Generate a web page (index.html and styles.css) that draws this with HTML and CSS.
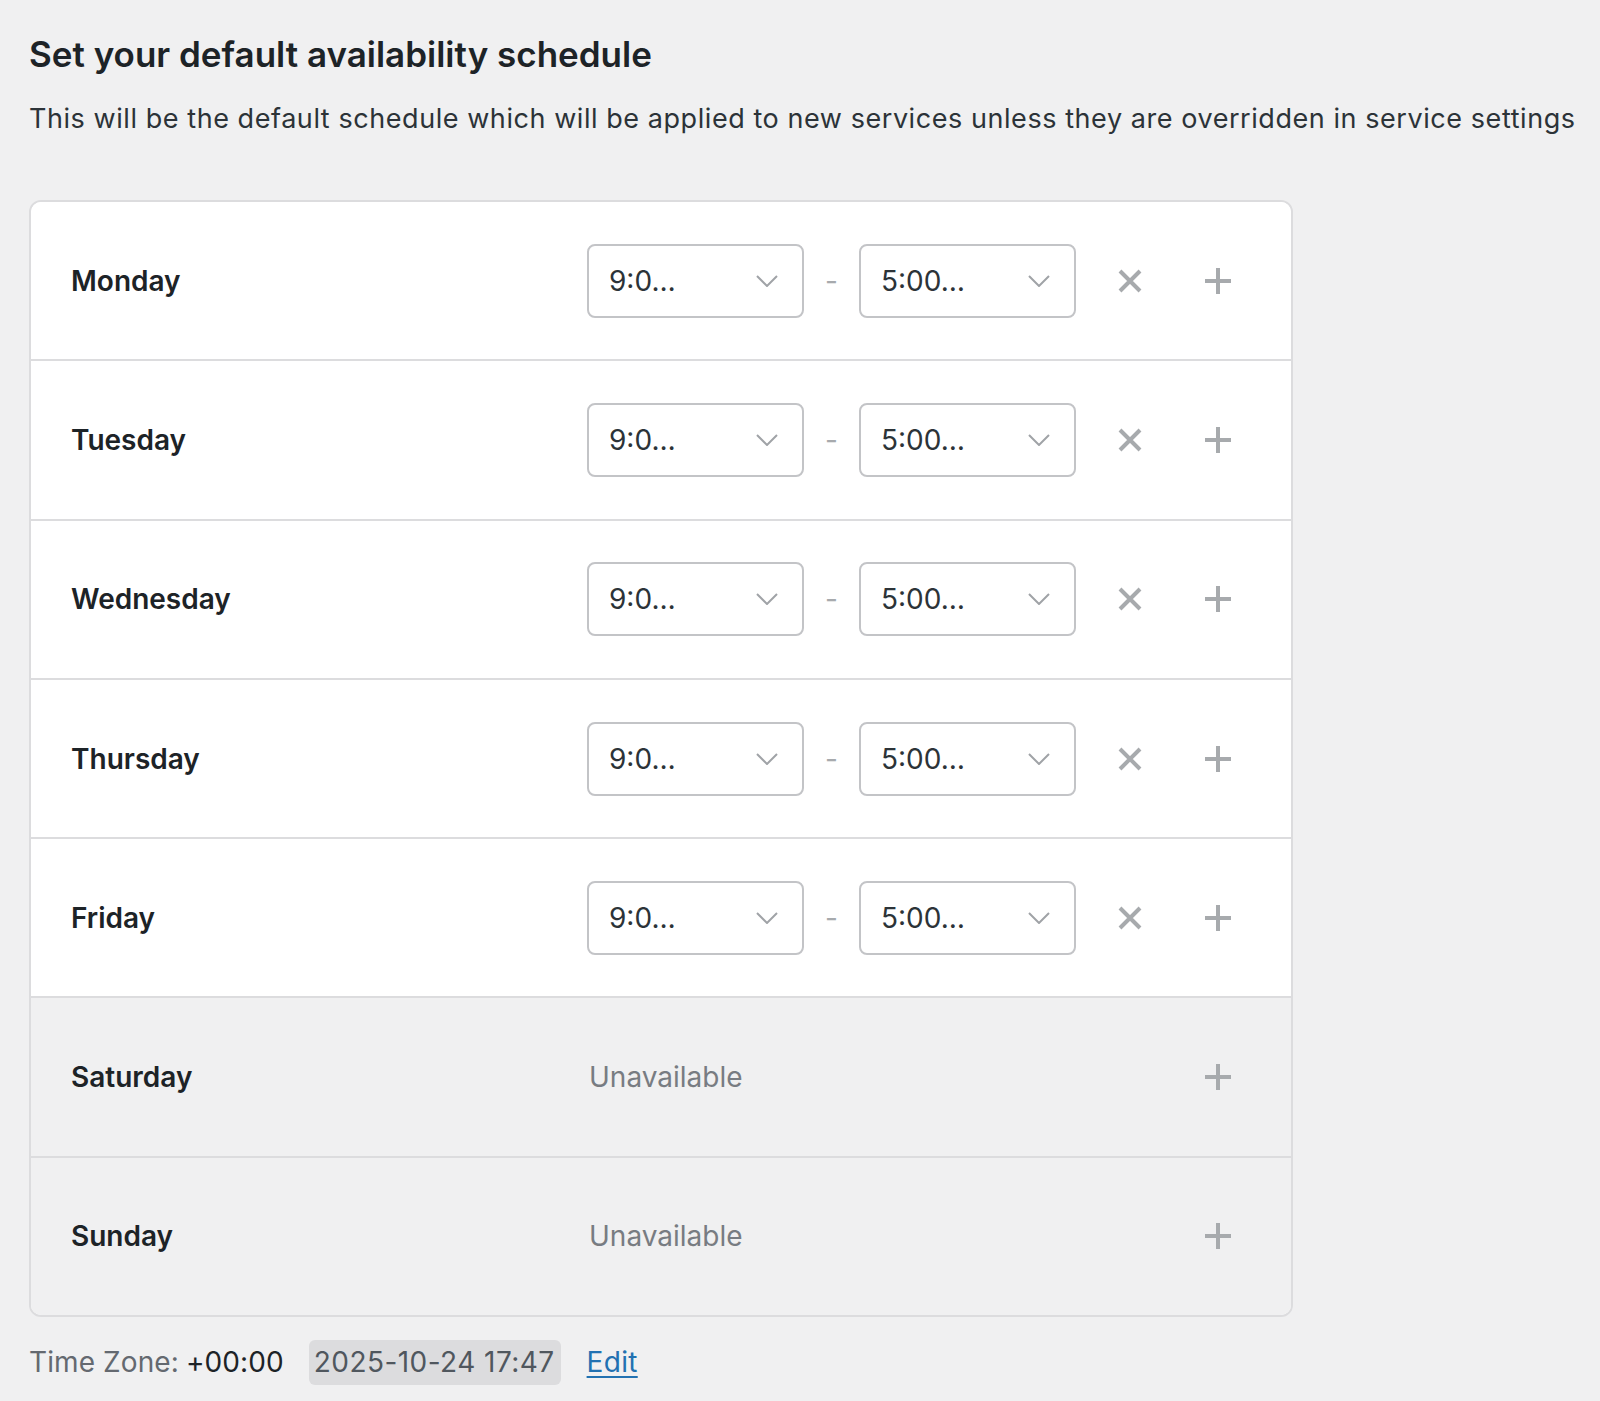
FILE: index.html
```html
<!DOCTYPE html>
<html lang="en">
<head>
<meta charset="utf-8">
<title>Availability schedule</title>
<link rel="stylesheet" href="styles.css">
</head>
<body>
<div class="page">
  <h1 class="title">Set your default availability schedule</h1>
  <p class="desc">This will be the default schedule which will be applied to new services unless they are overridden in service settings</p>

  <div class="card">
    <div class="row">
      <div class="day">Monday</div>
      <div class="select"><span class="val">9:0…</span><svg class="chev" width="22" height="12" viewBox="0 0 22 12"><polyline points="1,1 11,11 21,1"/></svg></div>
      <div class="dash">-</div>
      <div class="select"><span class="val">5:00…</span><svg class="chev" width="22" height="12" viewBox="0 0 22 12"><polyline points="1,1 11,11 21,1"/></svg></div>
      <div class="actions">
        <span class="btn"><svg width="24" height="24" viewBox="0 0 24 24"><path d="M2 2L22 22M22 2L2 22"/></svg></span>
        <span class="btn"><svg width="28" height="28" viewBox="0 0 28 28"><path d="M14 1V27M1 14H27"/></svg></span>
      </div>
    </div>
    <div class="row">
      <div class="day">Tuesday</div>
      <div class="select"><span class="val">9:0…</span><svg class="chev" width="22" height="12" viewBox="0 0 22 12"><polyline points="1,1 11,11 21,1"/></svg></div>
      <div class="dash">-</div>
      <div class="select"><span class="val">5:00…</span><svg class="chev" width="22" height="12" viewBox="0 0 22 12"><polyline points="1,1 11,11 21,1"/></svg></div>
      <div class="actions">
        <span class="btn"><svg width="24" height="24" viewBox="0 0 24 24"><path d="M2 2L22 22M22 2L2 22"/></svg></span>
        <span class="btn"><svg width="28" height="28" viewBox="0 0 28 28"><path d="M14 1V27M1 14H27"/></svg></span>
      </div>
    </div>
    <div class="row">
      <div class="day">Wednesday</div>
      <div class="select"><span class="val">9:0…</span><svg class="chev" width="22" height="12" viewBox="0 0 22 12"><polyline points="1,1 11,11 21,1"/></svg></div>
      <div class="dash">-</div>
      <div class="select"><span class="val">5:00…</span><svg class="chev" width="22" height="12" viewBox="0 0 22 12"><polyline points="1,1 11,11 21,1"/></svg></div>
      <div class="actions">
        <span class="btn"><svg width="24" height="24" viewBox="0 0 24 24"><path d="M2 2L22 22M22 2L2 22"/></svg></span>
        <span class="btn"><svg width="28" height="28" viewBox="0 0 28 28"><path d="M14 1V27M1 14H27"/></svg></span>
      </div>
    </div>
    <div class="row">
      <div class="day">Thursday</div>
      <div class="select"><span class="val">9:0…</span><svg class="chev" width="22" height="12" viewBox="0 0 22 12"><polyline points="1,1 11,11 21,1"/></svg></div>
      <div class="dash">-</div>
      <div class="select"><span class="val">5:00…</span><svg class="chev" width="22" height="12" viewBox="0 0 22 12"><polyline points="1,1 11,11 21,1"/></svg></div>
      <div class="actions">
        <span class="btn"><svg width="24" height="24" viewBox="0 0 24 24"><path d="M2 2L22 22M22 2L2 22"/></svg></span>
        <span class="btn"><svg width="28" height="28" viewBox="0 0 28 28"><path d="M14 1V27M1 14H27"/></svg></span>
      </div>
    </div>
    <div class="row">
      <div class="day">Friday</div>
      <div class="select"><span class="val">9:0…</span><svg class="chev" width="22" height="12" viewBox="0 0 22 12"><polyline points="1,1 11,11 21,1"/></svg></div>
      <div class="dash">-</div>
      <div class="select"><span class="val">5:00…</span><svg class="chev" width="22" height="12" viewBox="0 0 22 12"><polyline points="1,1 11,11 21,1"/></svg></div>
      <div class="actions">
        <span class="btn"><svg width="24" height="24" viewBox="0 0 24 24"><path d="M2 2L22 22M22 2L2 22"/></svg></span>
        <span class="btn"><svg width="28" height="28" viewBox="0 0 28 28"><path d="M14 1V27M1 14H27"/></svg></span>
      </div>
    </div>
    <div class="row off">
      <div class="day">Saturday</div>
      <div class="unavail">Unavailable</div>
      <div class="actions">
        <span class="btn empty"></span>
        <span class="btn"><svg width="28" height="28" viewBox="0 0 28 28"><path d="M14 1V27M1 14H27"/></svg></span>
      </div>
    </div>
    <div class="row off">
      <div class="day">Sunday</div>
      <div class="unavail">Unavailable</div>
      <div class="actions">
        <span class="btn empty"></span>
        <span class="btn"><svg width="28" height="28" viewBox="0 0 28 28"><path d="M14 1V27M1 14H27"/></svg></span>
      </div>
    </div>
  </div>

  <div class="footer">
    <span class="tz-label">Time Zone:</span>
    <span class="tz-val">+00:00</span>
    <span class="tz-date">2025-10-24 17:47</span>
    <a class="tz-edit" href="#">Edit</a>
  </div>
</div>
</body>
</html>
```

FILE: styles.css
```css
html, body {
  margin: 0;
  padding: 0;
  background: #f0f0f1;
}

body {
  font-family: Inter, "Noto Sans", "Liberation Sans", sans-serif;
  color: #1d2327;
}

.page {
  padding: 34px 29px 0 29px;
}

.title {
  margin: 0;
  font-size: 35px;
  line-height: 40px;
  font-weight: 600;
  color: #1d2327;
}

.desc {
  margin: 29px 0 0 0;
  font-size: 27px;
  line-height: 32px;
  letter-spacing: 0.56px;
  color: #2c3338;
  white-space: nowrap;
}

.card {
  margin-top: 65px;
  width: 1264px;
  box-sizing: border-box;
  border: 2px solid #dcdcde;
  border-radius: 12px;
  overflow: hidden;
  background: #fff;
}

.row {
  display: grid;
  grid-template-columns: 556px 217px 55px 217px 1fr;
  align-items: center;
  height: 157.3px;
  background: #fff;
}

.row + .row {
  border-top: 2px solid #dcdcde;
}

.row.off {
  background: #f0f0f1;
  grid-template-columns: 556px 489px 1fr;
}

.day {
  padding-left: 40px;
  font-size: 28px;
  font-weight: 600;
  color: #1d2327;
}

.select {
  box-sizing: border-box;
  height: 74px;
  border: 2px solid #c3c4c7;
  border-radius: 8px;
  background: #fff;
  display: flex;
  align-items: center;
  justify-content: space-between;
  padding: 0 24px 0 20px;
}

.val {
  font-size: 28px;
  color: #2c3338;
}

.chev polyline {
  fill: none;
  stroke: #a0a3a7;
  stroke-width: 2;
}

.dash {
  text-align: center;
  font-size: 28px;
  color: #a7aaad;
}

.actions {
  display: flex;
  align-items: center;
  padding-left: 32px;
  gap: 44px;
}

.btn {
  width: 44px;
  height: 44px;
  display: flex;
  align-items: center;
  justify-content: center;
}

.btn path {
  fill: none;
  stroke: #a7aaad;
  stroke-width: 4;
}

.unavail {
  padding-left: 2px;
  font-size: 28px;
  color: #787c82;
}

.footer {
  margin-top: 23px;
  display: flex;
  align-items: center;
  font-size: 28px;
  line-height: 45px;
}

.tz-label {
  color: #646970;
  letter-spacing: 0.1px;
}

.tz-val {
  margin-left: 7px;
  color: #1d2327;
  letter-spacing: 0.1px;
}

.tz-date {
  margin-left: 25px;
  padding: 0 6px 0 5px;
  background: #dcdcde;
  border-radius: 6px;
  color: #50575e;
  letter-spacing: 0.45px;
}

.tz-edit {
  margin-left: 26px;
  color: #2271b1;
  text-decoration: underline;
  text-underline-offset: 4px;
  letter-spacing: 0.3px;
}
```
